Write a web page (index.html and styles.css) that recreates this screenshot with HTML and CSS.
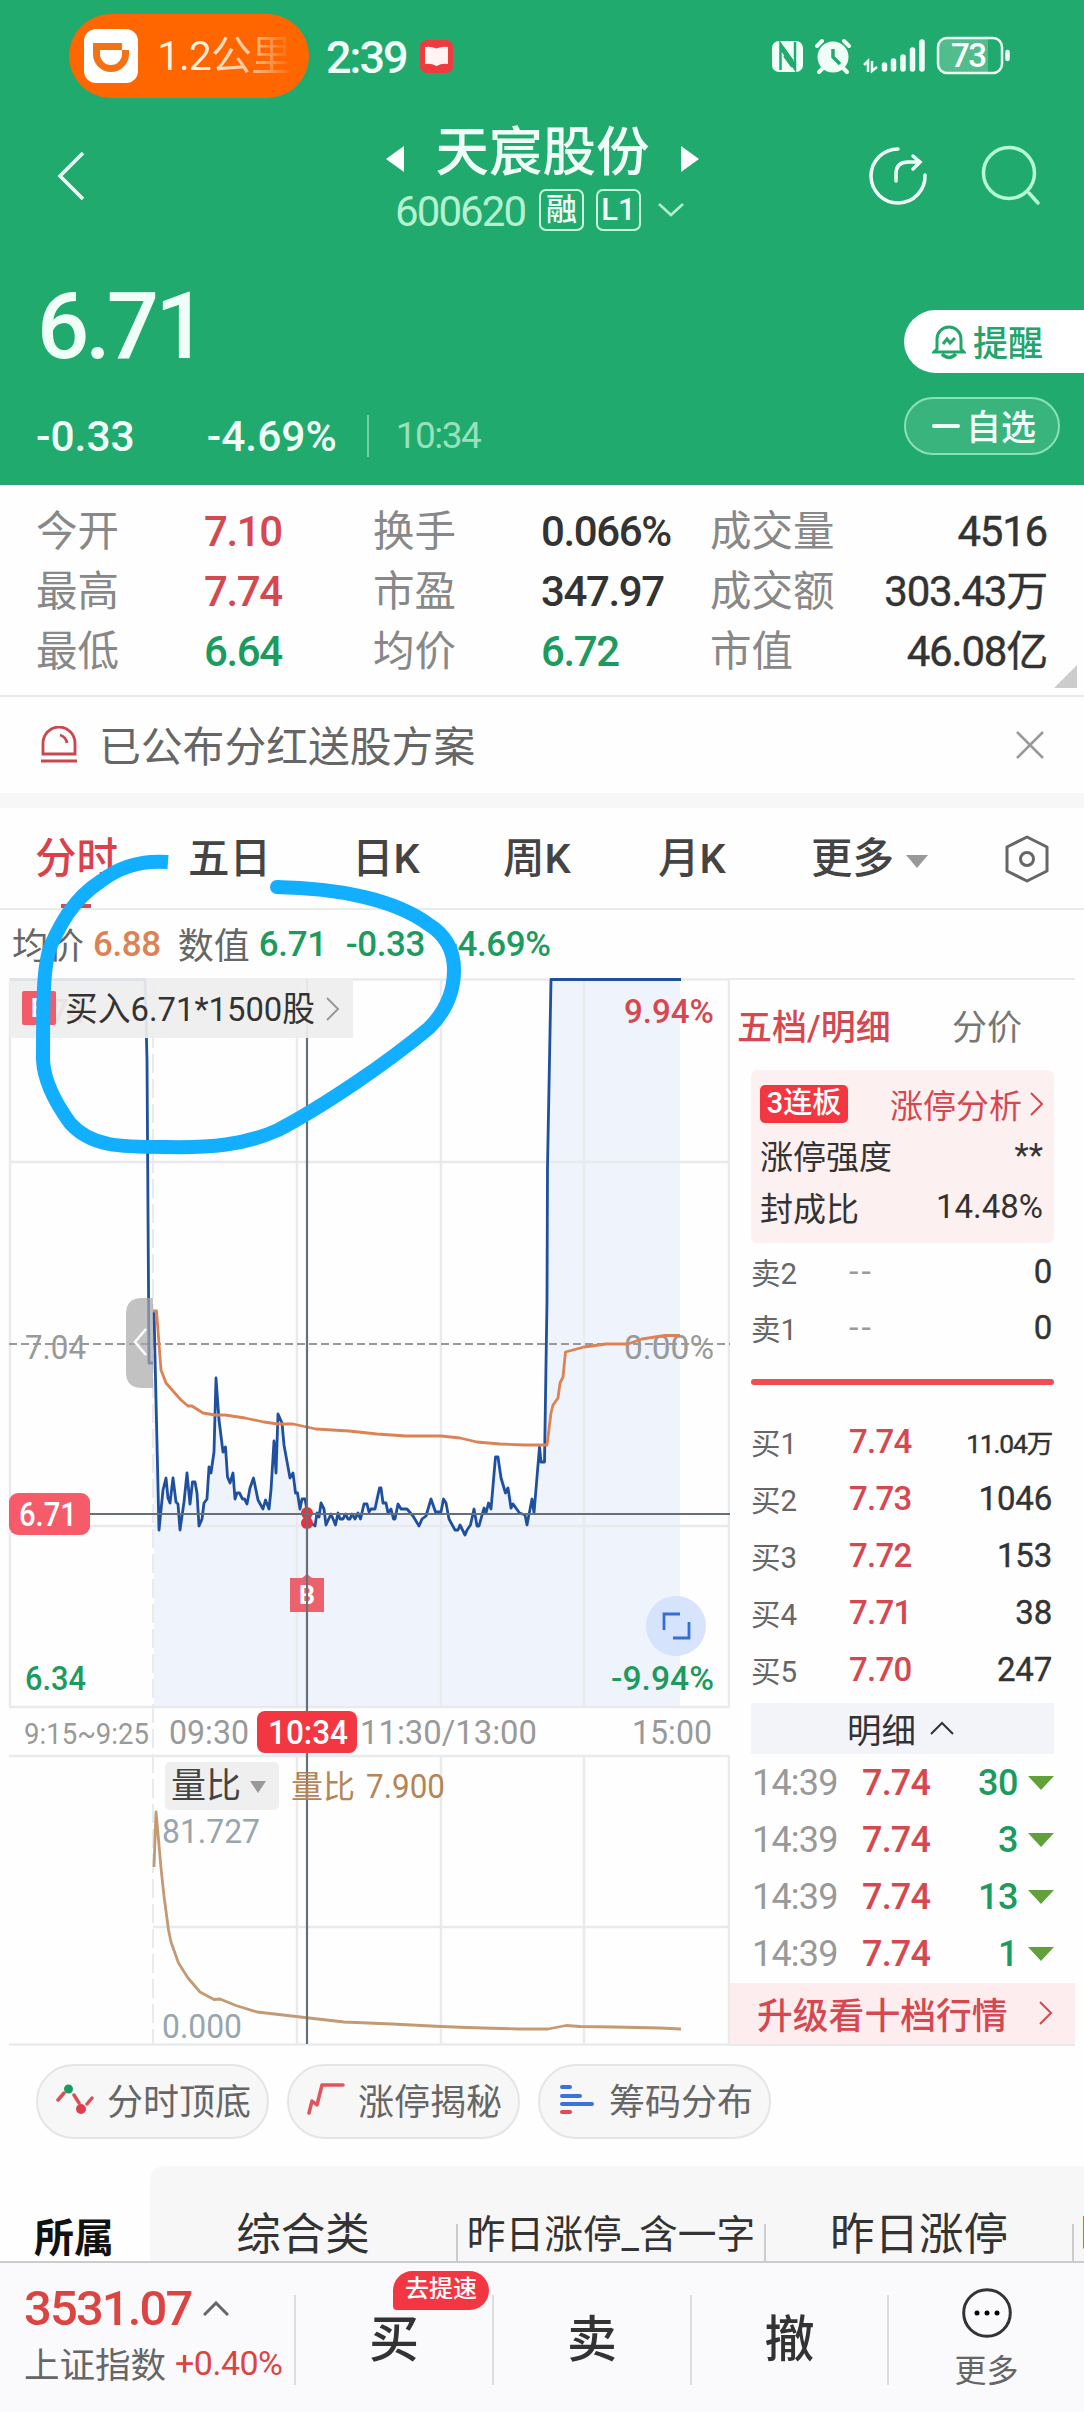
FILE: index.html
```html
<!DOCTYPE html>
<html lang="zh-CN">
<head>
<meta charset="utf-8">
<title>天宸股份 600620</title>
<link rel="stylesheet" href="styles.css">
</head>
<body>
<div class="app">
  <header class="hero">
    <div class="status">
      <div class="ride">
        <svg width="54" height="54" viewBox="0 0 54 54"><rect width="54" height="54" rx="12" fill="#fff"/><path d="M9 14H38V21H45V25A18 18 0 0 1 9 25Z" fill="#f47216"/><path d="M16 21H38V25A11 11 0 0 1 16 25Z" fill="#fff"/></svg>
        <span>1.2公里</span>
      </div>
      <span class="clock">2:39</span>
      <svg class="book" width="33" height="33" viewBox="0 0 33 33"><rect width="33" height="33" rx="7" fill="#ee3b40"/><path d="M5 7Q11 6 16.500 8.500Q22 6 28 7V24Q22 23 16.500 26Q11 23 5 24Z" fill="#fff4f2"/></svg>
      <svg class="sys" width="242" height="42" viewBox="770 35 242 42" fill="none" stroke="#effff8">
        <rect x="772" y="41" width="31" height="31" rx="7" fill="#effff8" stroke="none"/>
        <path d="M780.500 70V44L795 66V42M795 42V69L780.500 48" stroke="#21aa6e" stroke-width="2.500"/><path d="M784 56L792 67M783 47L793 61" stroke="#21aa6e" stroke-width="2"/>
        <circle cx="833" cy="57" r="15.500" fill="#effff8" stroke="none"/>
        <path d="M817 46L822 41M849 46L844 41M823 68L819 72M843 68L847 72" stroke-width="4" stroke-linecap="round"/>
        <path d="M833 49V57L840 64" stroke="#21aa6e" stroke-width="3.500"/>
        <path d="M864 65L868 61V72M872 61V71L877 67" stroke-width="2.500"/>
        <path d="M884.500 65V69M893.500 61V69M903 57V69M912.500 50V69M922 42V69" stroke-width="5.500" stroke-linecap="round"/>
        <path d="M945 39H988V72H945Q939 72 939 65V46Q939 39 945 39Z" fill="#52bd8c" stroke="none"/>
        <rect x="938" y="38" width="64" height="35" rx="9" stroke-width="2.500"/>
        <path d="M1007.500 52V59" stroke-width="4.500" stroke-linecap="round"/>
        <text x="951" y="66.500" class="battery" textLength="36">73</text>
      </svg>
    </div>
    <div class="titlebar">
      <svg class="back" width="30" height="52" viewBox="57 150 30 52" fill="none" stroke="#effff8" stroke-width="3.500"><path d="M83 153L60 176L83 199"/></svg>
      <div class="name">
        <div class="name-line"><i class="tri-left"></i><h1>天宸股份</h1><i class="tri-right"></i></div>
        <div class="code-line"><span class="code">600620</span><b>融</b><b>L1</b><svg width="26" height="14" viewBox="0 0 26 14" fill="none" stroke="#b4f1d1" stroke-width="2.500"><path d="M1 1L13 12L25 1"/></svg></div>
      </div>
      <svg class="actions" width="174" height="62" viewBox="868 145 174 62" fill="none" stroke="#d8ffed" stroke-width="3.500" stroke-linecap="round">
        <path d="M898 149A27 27 0 1 0 925 175" stroke="#effff8"/><path d="M896 181V174Q896 162 908 162H919M913 156L920 162L913 169" stroke="#effff8"/>
        <g stroke="#b4f8d6"><circle cx="1009" cy="173" r="25.500"/><path d="M1029 193L1038 203"/></g>
      </svg>
    </div>
    <div class="quote">
      <div>
        <div class="price">6.71</div>
        <div class="change"><span>-0.33</span><span class="pct">-4.69%</span><time>10:34</time></div>
      </div>
      <div class="buttons">
        <div class="remind"><svg width="34" height="36" viewBox="0 0 34 36" fill="none" stroke="#21a56b" stroke-width="3"><path d="M5 25V15A12 12 0 0 1 29 15V25L32 28H2Z"/><path d="M10 30Q17 37 24 30" stroke-width="3.500"/><path d="M11 20L15 15L18 19L23 14"/></svg><span>提醒</span></div>
        <div class="watch"><i></i><span>自选</span></div>
      </div>
    </div>
  </header>

  <section class="stats">
    <span>今开</span><b class="up">7.10</b><span>换手</span><b>0.066%</b><span>成交量</span><b class="end">4516</b>
    <span>最高</span><b class="up">7.74</b><span>市盈</span><b>347.97</b><span>成交额</span><b class="end">303.43万</b>
    <span>最低</span><b class="down">6.64</b><span>均价</span><b class="down">6.72</b><span>市值</span><b class="end">46.08亿</b>
    <i class="corner"></i>
  </section>

  <section class="notice">
    <svg width="36" height="38" viewBox="0 0 36 38" fill="none" stroke="#c9474e" stroke-width="2.800"><path d="M2 28V17A15 15 0 0 1 34 17V28ZM0 35H36"/><path d="M19 9Q25 11 26 17"/></svg>
    <span>已公布分红送股方案</span>
    <svg width="28" height="28" viewBox="0 0 28 28" stroke="#999" stroke-width="2.500"><path d="M1 1L27 27M27 1L1 27"/></svg>
  </section>

  <nav class="tabs">
    <span class="active">分时</span><span>五日</span><span>日K</span><span>周K</span><span>月K</span><span>更多<i></i></span>
    <svg width="46" height="50" viewBox="0 0 46 50" fill="none" stroke="#666" stroke-width="3"><path d="M23 3L43 13V37L23 47L3 37V13Z" stroke-linejoin="round"/><circle cx="23" cy="25" r="6.500"/></svg>
  </nav>

  <section class="readout"><span>均价</span><b class="avg">6.88</b><span>数值</span><b>6.71</b><b class="diff">-0.33</b><b>-4.69%</b></section>

  <main class="market">
    <svg class="chart" width="730" height="1068" viewBox="0 978 730 1068">
      <path d="M154 1312L159 1530L166 1478L170 1503L173 1478L177 1503L180 1530L187 1473L190 1504L193 1482H195L199 1526L204 1503L209 1467L214 1452L216 1378L219 1420L223 1452L226 1447L230 1483L233 1473L235 1499L247 1504L254 1478L263 1509L269 1509L274 1441L276 1473L278 1414L284 1445L290 1478L300 1509L307 1513L315 1526L321 1503L326 1525L360 1518L380 1488L394 1519L407 1509L419 1526L431 1499L441 1512L455 1530L465 1535L474 1509L491 1509L496 1457L508 1488L527 1525L534 1513L540 1447L545 1462L551 979H680V1707H154Z" fill="#eff3fc"/>
      <g fill="none" stroke="#e9eaec" stroke-width="2.500">
        <path d="M9 979.500H730M10 1162H729M10 1526H729M9 1707H729M10 979V1707M729 979V1707M297 979V1707M441 979V1707M584 979V1707"/>
        <path d="M9 1756H729M153 1927H729M9 2044.500H730M297 1756V2044M441 1756V2044M584 1756V2044M729 1756V2044"/>
        <path d="M153 979V2044" stroke-dasharray="19 6" stroke-width="2"/>
      </g>
      <path d="M9 1344H730" stroke="#999" stroke-width="2" stroke-dasharray="8 4"/>
      <g class="num grey" font-size="34">
        <text x="25" y="1358.500" textLength="61" lengthAdjust="spacingAndGlyphs">7.04</text><text x="624" y="1358.500" textLength="90" lengthAdjust="spacingAndGlyphs">0.00%</text>
        <text x="24" y="1744" font-size="30" textLength="125" lengthAdjust="spacingAndGlyphs">9:15~9:25</text><text x="169" y="1744" textLength="80" lengthAdjust="spacingAndGlyphs">09:30</text><text x="360" y="1744" textLength="177" lengthAdjust="spacingAndGlyphs">11:30/13:00</text><text x="632" y="1744" textLength="80" lengthAdjust="spacingAndGlyphs">15:00</text>
      </g>
      <g class="num" font-size="34" font-weight="500">
        <text x="25" y="1023" fill="#d6484f" textLength="61">7.74</text>
        <text x="624" y="1023" fill="#d6484f" textLength="90" lengthAdjust="spacingAndGlyphs">9.94%</text>
        <text x="25" y="1690" fill="#1b9b5e" textLength="61" lengthAdjust="spacingAndGlyphs">6.34</text><text x="611" y="1690" fill="#1b9b5e" textLength="103" lengthAdjust="spacingAndGlyphs">-9.94%</text>
      </g>
      <g fill="none" stroke-linejoin="round" stroke-width="2.800">
        <path stroke="#1f4f9f" d="M10 979.500H145L147 1060L149 1363H153M154 1312L156 1400L159 1530L163 1490L166 1478L168 1498L170 1503L173 1478L176 1502L178 1504L180 1530L184 1502L187 1473L190 1504L192.500 1482H195L197 1493L199 1526L202 1519L204 1503L207 1499L209 1467L211 1473L214 1452L216 1378L219 1420L223 1452L225.500 1447L227.500 1477L230 1483L233 1473L235 1499L237 1493H239.500L242.500 1499H244.500L247 1504L250 1488L253.500 1478L258 1500L263 1509L265.500 1500L269 1509L271 1490L274 1441L276 1473L278 1414L282 1423L284 1445L290 1478L293 1473L295.500 1493H297.500L300 1509L302 1499H305L307.500 1513L311 1523L315 1526L317 1513L319 1517L321 1503L324 1509L326 1525L331 1514L335.500 1525L338 1513L340 1519H343L345.500 1514L348 1519H350L352 1514L355 1519L358 1513L360.500 1519L364 1504H367L369 1512L371 1509H375L379.500 1488H381L383 1503H386L388 1513L391 1509L393.500 1519H395L398 1504L401 1509H407L413 1516L419 1526L422 1519L426 1516L431 1499L435.500 1512H441L443.500 1499L446 1503L449 1519L455 1530H458L460 1525L465 1535L467 1530L470.500 1525L474 1509L477 1526H479L484 1508L486 1513L488.500 1503L491 1509L495.500 1457H498L501 1478L505.500 1493L508 1488L511 1508L513 1504L519.500 1513L525 1515L527 1525L532 1499L534 1513L539.500 1447L541 1462H544.500L547 1300L547.500 1167L551 979.500H681"/>
        <path stroke="#dc8254" d="M153 1311H156.500L161 1370L166 1383L173 1391L181 1400L188 1406H192L203 1413L215 1415H225L245 1418L264 1422L278 1424H293L316 1429L349 1431L377 1434L406 1436H441L460 1438L477 1442L500 1444L525 1445H547L551 1413L553 1405L558 1398L560 1383L563 1377L565.500 1352L584 1347L606 1344H628L642 1339L665 1335.500H680"/>
        <path stroke="#c29a74" d="M154 1867L156 1812L159 1845L161 1868L164 1896L168.500 1930L171 1942L173.500 1949L178.500 1963L188 1978L200 1992L214 1999.500L220 1999L236 2005.500L257 2012L283 2015L309 2018L344 2022L392 2024L441 2026.500L467 2027.500L519 2029H548L566 2025.500L580 2026.500L614 2027L660 2028L681 2029"/>
      </g>
      <path d="M153 1298H142Q126 1298 126 1314V1372Q126 1388 142 1388H153Z" fill="#a8a8a8" fill-opacity=".7"/><path d="M146 1329L135 1342L146 1355" fill="none" stroke="#fff" stroke-width="2.500"/>
      <circle cx="307" cy="1513" r="6" fill="#f02f3e"/><circle cx="307" cy="1523" r="6" fill="#f02f3e"/>
      <path d="M290 1578H302L307 1574L312 1578H324V1612H290Z" fill="#ec626c"/><text x="299" y="1604" class="num" font-size="25" font-weight="700" fill="#fff">B</text>
      <path d="M307 979V2044M9 1514H730" stroke="#66707a" stroke-width="2.200"/>
      <rect x="9" y="1493" width="81" height="42" rx="9" fill="#f55b68"/><text x="19" y="1526" class="num" font-size="34" font-weight="500" fill="#fff" textLength="58" lengthAdjust="spacingAndGlyphs">6.71</text>
      <rect x="257" y="1711" width="100" height="42" rx="8" fill="#f33742"/><text x="268" y="1744" class="num" font-size="34" font-weight="500" fill="#fff" textLength="80" lengthAdjust="spacingAndGlyphs">10:34</text>
      <circle cx="676" cy="1626" r="30" fill="#d0dffc" fill-opacity=".85"/><path d="M664 1630V1614H680M673 1638H689V1622" fill="none" stroke="#346fd5" stroke-width="2.800"/>
      <rect x="9" y="978" width="344" height="60" fill="#eee" fill-opacity=".93"/>
      <rect x="22" y="991" width="34" height="34" rx="2" fill="#f15c68"/><text x="31" y="1017" class="num" font-size="25" font-weight="700" fill="#fff">B</text>
      <text x="65" y="1021" class="num" font-size="34" fill="#333" textLength="250" lengthAdjust="spacingAndGlyphs">买入6.71*1500股</text><path d="M327 998L338 1009L327 1020" fill="none" stroke="#999" stroke-width="2"/>
      <rect x="165" y="1762" width="114" height="48" rx="5" fill="#efefef"/><text x="171" y="1798" class="num" font-size="35" fill="#444">量比</text><path d="M250 1781H266L258 1793Z" fill="#999"/>
      <g class="num" font-size="32"><g fill="#b58555"><text x="291" y="1798">量比</text><text x="366" y="1798" font-size="33" textLength="79" lengthAdjust="spacingAndGlyphs">7.900</text></g>
      <g fill="#97a5ae" font-size="34"><text x="162" y="1843" textLength="98" lengthAdjust="spacingAndGlyphs">81.727</text><text x="162" y="2038" textLength="80" lengthAdjust="spacingAndGlyphs">0.000</text></g></g>
    </svg>

    <aside class="depth">
      <div class="depth-tabs"><span>五档/明细</span><span>分价</span></div>
      <div class="limit">
        <div class="red"><em>3连板</em><span>涨停分析<svg width="13" height="24" viewBox="0 0 13 24" fill="none" stroke="#d6484f" stroke-width="2"><path d="M1 1L12 12L1 23"/></svg></span></div>
        <div><span>涨停强度</span><span>**</span></div>
        <div><span>封成比</span><span>14.48%</span></div>
      </div>
      <div class="levels sell">
        <div><span>卖2</span><i>--</i><b>0</b></div>
        <div><span>卖1</span><i>--</i><b>0</b></div>
      </div>
      <div class="ratio"></div>
      <div class="levels buy">
        <div><span>买1</span><em>7.74</em><b class="small">11.04万</b></div>
        <div><span>买2</span><em>7.73</em><b>1046</b></div>
        <div><span>买3</span><em>7.72</em><b>153</b></div>
        <div><span>买4</span><em>7.71</em><b>38</b></div>
        <div><span>买5</span><em>7.70</em><b>247</b></div>
      </div>
      <div class="detail">明细<svg width="24" height="14" viewBox="0 0 24 14" fill="none" stroke="#333" stroke-width="2"><path d="M1 13L12 2L23 13"/></svg></div>
      <div class="trades">
        <div><time>14:39</time><em>7.74</em><b>30</b><i></i></div>
        <div><time>14:39</time><em>7.74</em><b>3</b><i></i></div>
        <div><time>14:39</time><em>7.74</em><b>13</b><i></i></div>
        <div><time>14:39</time><em>7.74</em><b>1</b><i></i></div>
      </div>
      <div class="upgrade">升级看十档行情<svg width="14" height="24" viewBox="0 0 14 24" fill="none" stroke="#d6484f" stroke-width="2"><path d="M1 1L12 12L1 23"/></svg></div>
    </aside>
  </main>

  <section class="tools">
    <div><svg width="38" height="36" viewBox="0 0 38 36" fill="none" stroke="#d9505a" stroke-width="3.500" stroke-linecap="round"><path d="M2 19L8 12M18 14L23 22M31 23L36 17"/><circle cx="12.500" cy="8" r="4.500" fill="#1b9b5e" stroke="none"/><circle cx="25" cy="28" r="5" fill="#e23f4c" stroke="none"/></svg>分时顶底</div>
    <div><svg width="38" height="36" viewBox="0 0 38 36" fill="none" stroke="#e2545c" stroke-width="3.500" stroke-linecap="round" stroke-linejoin="round"><path d="M2 32L5 20L10 24L15 4H36"/></svg>涨停揭秘</div>
    <div><svg width="38" height="36" viewBox="0 0 38 36" fill="none" stroke="#3b74d8" stroke-width="4" stroke-linecap="round"><path d="M4 6H12M4 15H22M4 23H34"/><path d="M4 31H12" stroke="#df4b57"/></svg>筹码分布</div>
  </section>

  <section class="sectors">
    <strong>所属</strong>
    <div class="strip"><span>综合类</span><span class="long">昨日涨停_含一字</span><span>昨日涨停</span><span class="next">昨</span></div>
  </section>

  <footer class="bottom">
    <div class="index"><div class="points">3531.07<svg width="26" height="15" viewBox="0 0 26 15" fill="none" stroke="#666" stroke-width="3"><path d="M1 14L13 2L25 14"/></svg></div><div class="index-name">上证指数<b>+0.40%</b></div></div>
    <div class="trade">买<em>去提速</em></div>
    <div class="trade">卖</div>
    <div class="trade">撤</div>
    <div class="more"><svg width="50" height="50" viewBox="0 0 50 50"><circle cx="25" cy="25" r="23.300" fill="none" stroke="#333" stroke-width="3"/><circle cx="15" cy="25" r="2.500"/><circle cx="25" cy="25" r="2.500"/><circle cx="35" cy="25" r="2.500"/></svg>更多</div>
  </footer>

  <svg class="marker" width="480" height="320" viewBox="0 850 480 320" fill="none" stroke="#12aeff" stroke-width="14" stroke-linejoin="round"><path d="M168 862C142 860 119 867 101 881C73 899 60 925 51 945C43 965 43 1000 43 1060C44 1082 57 1105 70 1123C91 1147 121 1147 165 1147C210 1148 245 1145 278 1130C320 1108 385 1065 429 1028C447 1010 454 990 454 970C454 950 446 935 428 924C395 900 340 888 276 887"/><circle cx="277" cy="887" r="3.500" stroke-width="7"/></svg>
</div>
</body>
</html>
```
FILE: styles.css
```css
* { box-sizing: border-box; }
body { margin: 0; background: #fefefe; }
i, em { font-style: normal; }
b { font-weight: 400; }
svg { display: block; flex: none; }

.app {
  position: relative;
  width: 1084px;
  height: 2412px;
  overflow: hidden;
  display: flex;
  flex-direction: column;
  color: #333;
  font-family: Roboto, "Noto Sans CJK SC", sans-serif;
  white-space: nowrap;
}
.num { font-family: Roboto, "Noto Sans CJK SC", sans-serif; }
.grey { fill: #999; }
.up { color: #d6484f; }
.down { color: #1b9b5e; }

/* header */
.hero { height: 485px; background: #21aa6e; color: #effff8; display: flex; flex-direction: column; }
.status { height: 112px; padding-left: 69px; display: flex; align-items: center; }
.ride {
  width: 240px; height: 84px; padding-left: 15px; border-radius: 42px; background: #ff6600;
  display: flex; align-items: center; gap: 19px;
}
.ride span {
  font-size: 41px; letter-spacing: -1px; width: 136px; overflow: hidden; line-height: 60px;
  background: linear-gradient(90deg, #fff0e0 30%, #ffc9a0 65%, rgba(255, 180, 130, 0) 100%);
  -webkit-background-clip: text; background-clip: text; color: transparent;
}
.clock { margin-left: 17px; width: 94px; padding-top: 2px; font-size: 45px; font-weight: 500; letter-spacing: -2px; }
.sys { margin-left: 317px; }
.battery { font: 500 33px Roboto, sans-serif; fill: #fff; stroke: none; }
.titlebar { height: 130px; display: flex; }
.back { margin: 38px 299px 0 57px; }
.name { width: 314px; margin-left: 0; }
.name-line { height: 77px; padding-right: 1px; display: flex; align-items: center; justify-content: space-between; }
h1 { margin: 4px 0 0; font-size: 53.500px; line-height: 76px; font-weight: 500; }
.tri-left, .tri-right { margin-top: 17px; border: 13px solid transparent; border-width: 13px 0; }
.tri-left { border-right: 18px solid #fff; }
.tri-right { border-left: 18px solid #fff; }
.code-line { height: 42px; padding-left: 9px; display: flex; align-items: center; }
.code { width: 144px; padding-top: 3px; font-size: 42px; letter-spacing: -1.900px; color: #b4f1d1; }
.code-line b {
  width: 45px; height: 42px; margin-right: 12px; border: 2px solid #c7f9df; border-radius: 7px;
  font-size: 31px; line-height: 38px; text-align: center; font-weight: 500;
}
.code-line svg { margin-left: 5px; }
.actions { margin: 33px 0 0 168px; }
.quote { flex: 1; display: flex; justify-content: space-between; }
.price { height: 168px; padding: 33px 0 0 37px; font-size: 92px; line-height: 104px; font-weight: 500; letter-spacing: -4px; }
.change { height: 50px; padding: 2px 0 0 36px; display: flex; align-items: center; font-size: 42.500px; font-weight: 500; letter-spacing: 0; }
.change .pct { width: 130px; margin-left: 72px; letter-spacing: 0; }
.change time { margin-left: 30px; padding-left: 27px; border-left: 2px solid #73cea2; font-size: 37px; font-weight: 400; line-height: 42px; color: #99e0bd; letter-spacing: -1.500px; }
.buttons { width: 180px; padding-top: 68px; font-size: 35px; font-weight: 500; }
.buttons span { margin-top: -3px; }
.remind { height: 63px; padding-left: 28px; border-radius: 32px 0 0 32px; background: #fff; color: #21a56b; display: flex; align-items: center; gap: 7px; }
.watch { width: 156px; height: 58px; margin-top: 24px; padding-left: 26px; border: 2px solid #8be1b6; border-radius: 29px; background: #38b47c; display: flex; align-items: center; gap: 6px; }
.watch i { width: 28px; height: 3.500px; border-radius: 2px; background: #effff8; }

/* key figures */
.stats {
  position: relative; height: 212px; padding: 17px 37px 0 36px; border-bottom: 2px solid #eaeaea;
  display: grid; grid-template-columns: 168px 169px 168px 169px 151px 1fr; grid-template-rows: repeat(3, 60px);
  font-size: 41.500px; line-height: 60px;
}
.stats span { color: #888; }
.stats b { font-size: 42px; font-weight: 500; letter-spacing: -1.400px; }
.stats .end { text-align: right; letter-spacing: -1.200px; font-weight: 400; -webkit-text-stroke: .4px; }
.corner { position: absolute; right: 7px; bottom: 7px; border-bottom: 23px solid #ccc; border-left: 23px solid transparent; }

.notice { height: 111px; padding: 0 40px 15px 41px; display: flex; align-items: center; color: #666; font-size: 41.800px; box-shadow: inset 0 -15px #f7f7f7; }
.notice span { flex: 1; margin: -3px 0 0 22px; }

.tabs { height: 102px; padding: 0 35px; border-bottom: 2px solid #eaeaea; display: grid; grid-template-columns: 153px 164px 151px 155px 153px 1fr 46px; align-items: center; font-size: 41.500px; line-height: 102px; font-weight: 500; color: #444; }
.tabs svg { margin-left: 1px; }
.tabs .active { color: #dc4049; background: linear-gradient(#c94f59, #c94f59) 26px 96px / 30px 4px no-repeat; }
.tabs i { display: inline-block; margin-left: 12px; vertical-align: 5px; border: 11px solid transparent; border-top: 13px solid #999; border-bottom: 0; }

.readout { height: 68px; padding-left: 12px; display: flex; align-items: center; font-size: 36px; color: #666; }
.readout span { margin-top: -2px; }
.readout b { font-weight: 500; font-size: 35px; letter-spacing: -.400px; color: #1b9b5e; margin-left: 9px; }
.readout .avg { color: #dc8254; margin-right: 17px; }
.readout .diff { margin: 0 12px 0 19px; }

/* chart and order book */
.market { height: 1068px; display: flex; }
.depth { width: 345px; border-top: 2px solid #eaeaea; border-bottom: 2px solid #eaeaea; }
.depth-tabs { height: 90px; padding: 0 0 2px 7px; display: flex; align-items: center; font-size: 35px; color: #777; }
.depth-tabs span:first-child { width: 215px; color: #d6484f; font-weight: 500; }
.limit { width: 303px; height: 173px; margin-left: 21px; padding: 8px 11px 0 9px; border-radius: 6px; background: #fdf0f1; font-size: 33px; }
.limit div { height: 51.500px; display: flex; align-items: center; justify-content: space-between; }
.limit .red span { display: flex; align-items: center; gap: 8px; color: #d6484f; }
.limit em { width: 88px; height: 38px; border-radius: 5px; background: #f33742; color: #fff; font-size: 29px; font-weight: 500; line-height: 36px; text-align: center; }
.levels { padding: 0 23px 0 21px; }
.levels div { height: 57px; display: grid; grid-template-columns: 98px 80px 1fr; align-items: center; font-size: 29.500px; color: #666; }
.sell div { height: 56px; }
.levels em { font-size: 33px; font-weight: 500; color: #d6484f; letter-spacing: -.700px; }
.levels i { font-size: 34px; color: #999; letter-spacing: 3px; }
.levels b { font-size: 33px; color: #333; text-align: right; letter-spacing: -.200px; -webkit-text-stroke: .4px; }
.levels .small { font-size: 26.500px; letter-spacing: -1.200px; }
.ratio { width: 303px; height: 6px; margin: 24px 0 27.500px 21px; border-radius: 3px; background: #f04c52; }
.detail { width: 303px; height: 51px; margin: 5px 0 0 21px; background: #f3f4f9; display: flex; align-items: center; justify-content: center; gap: 14px; padding-right: 4px; font-size: 34.500px; }
.trades { padding: 1px 21px 0 22px; }
.trades div { height: 57px; display: grid; grid-template-columns: 110px 70px 1fr 36px; align-items: center; font-size: 36px; letter-spacing: -.500px; }
.trades time { color: #999; letter-spacing: -.800px; }
.trades em { color: #d6484f; font-weight: 500; letter-spacing: -.800px; }
.trades b { color: #1b9b5e; font-weight: 500; text-align: right; }
.trades i { justify-self: end; border: 13px solid transparent; border-top: 14px solid #62a03c; border-bottom: 0; }
.upgrade { height: 61px; padding: 0 22px 0 27px; background: #fdedef; color: #d6484f; font-size: 35.800px; font-weight: 500; display: flex; align-items: center; justify-content: space-between; }

/* shortcuts */
.tools { height: 120px; padding: 18px 36px; display: flex; align-items: flex-start; gap: 18px; }
.tools div { width: 233px; height: 75px; padding: 0 0 5px 18px; border: 2px solid #e5e5e5; border-radius: 38px; background: #f7f7f7; display: flex; align-items: center; gap: 13px; color: #666; font-size: 36px; }
.sectors { height: 95px; display: flex; }
.sectors strong { width: 150px; padding: 43px 0 0 34px; font-size: 40px; line-height: 60px; color: #111; }
.strip { flex: 1; overflow: hidden; border-radius: 14px 0 0; background: #f7f7f7; display: flex; padding-top: 58px; }
.strip span { flex: none; width: 308px; height: 50px; line-height: 23px; font-size: 44.500px; text-align: center; border-right: 2px solid #ccc; }
.strip span:first-child { padding-right: 0; }
.strip .long { font-size: 38.700px; line-height: 22px; }
.strip .next { text-align: left; padding-left: 6px; }

/* trading bar */
.bottom { height: 151px; border-top: 2px solid #ccc; background: #fafafc; display: grid; grid-template-columns: 296px 198px 198px 197px 1fr; }
.bottom > div { position: relative; margin: 32px 0 34px; border-right: 2px solid #ddd; }
.index { padding-left: 24px; color: #dc4442; }
.points { height: 27px; margin-bottom: 24px; display: flex; align-items: center; gap: 12px; font-size: 49px; font-weight: 500; letter-spacing: -1.900px; }
.index-name { height: 32px; display: flex; align-items: center; font-size: 35.500px; color: #666; }
.index-name b { margin: 2px 0 0 9px; font-size: 34px; color: #dc4442; letter-spacing: -.500px; }
.trade { text-align: center; font-size: 50px; line-height: 90px; font-weight: 500; }
.trade em { position: absolute; left: 97px; top: -24px; width: 96px; height: 39px; border-radius: 20px 20px 20px 4px; background: #f33742; color: #fff; font-size: 24px; line-height: 37px; }
.bottom .more { border: 0; display: flex; flex-direction: column; align-items: center; margin: 25px 0 0; gap: 10px; font-size: 32px; color: #666; line-height: 46px; }

.marker { position: absolute; left: 0; top: 850px; }
```
